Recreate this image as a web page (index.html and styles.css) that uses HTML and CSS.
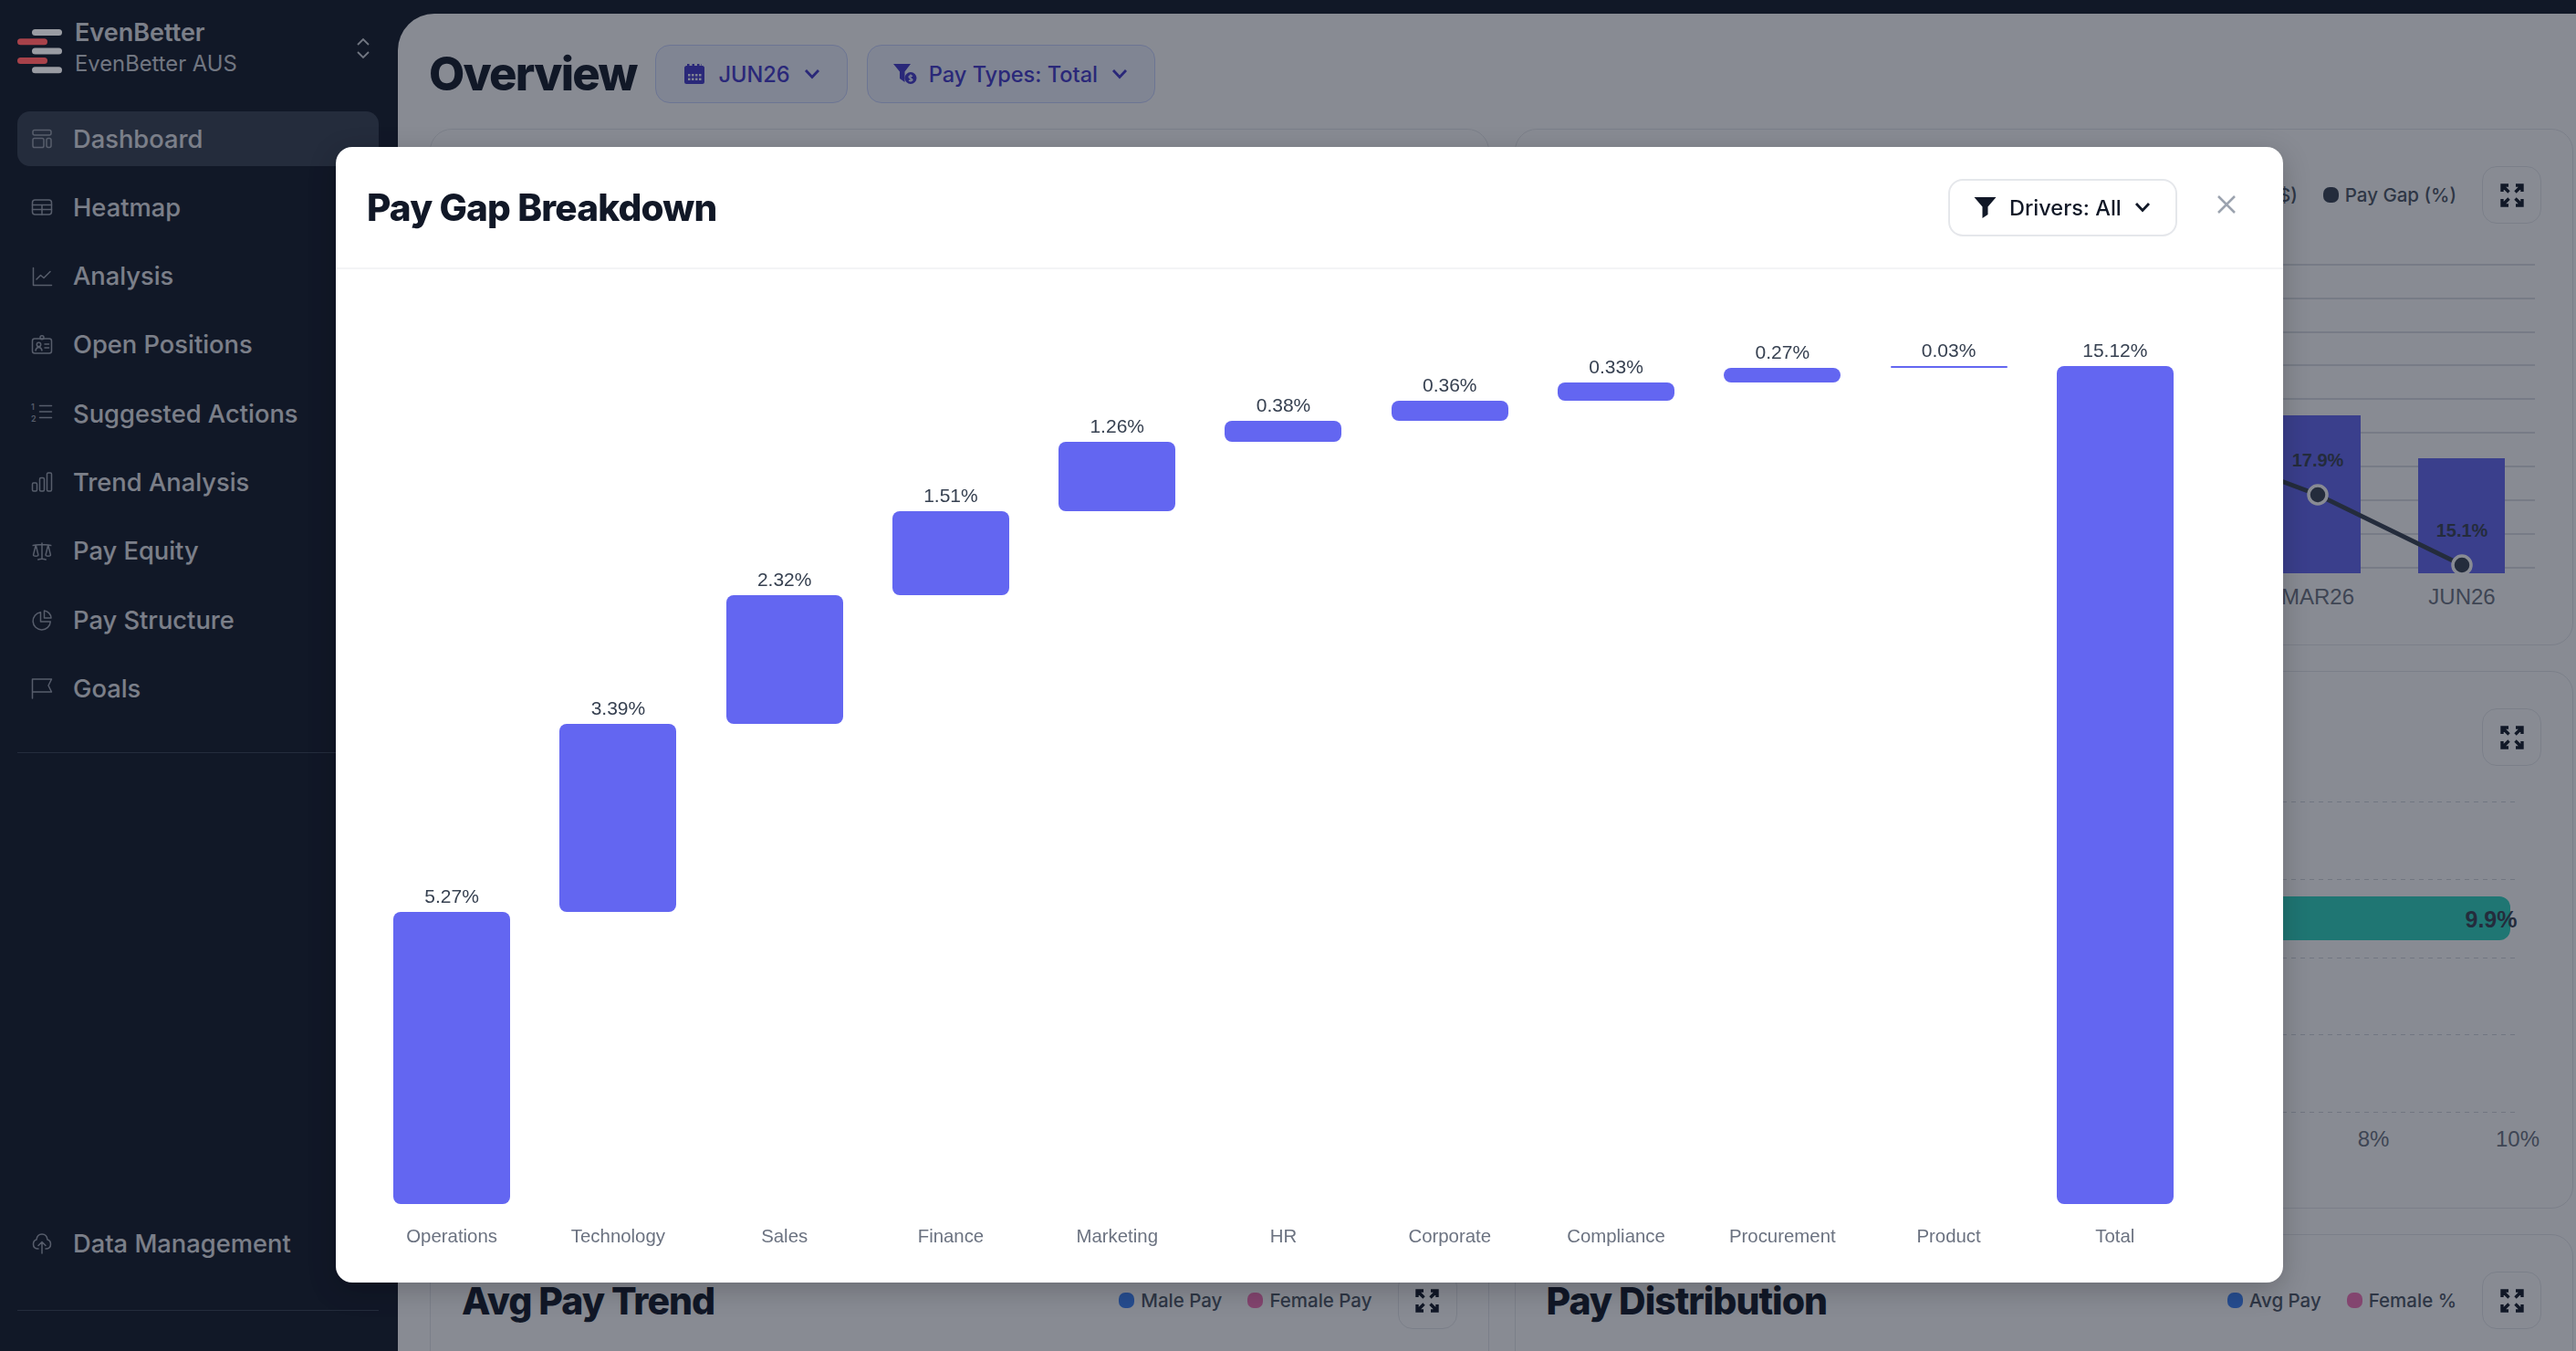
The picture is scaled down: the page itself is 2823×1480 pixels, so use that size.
FILE: index.html
```html
<!DOCTYPE html>
<html lang="en">
<head>
<meta charset="utf-8">
<title>Overview</title>
<link rel="stylesheet" href="styles.css">
</head>
<body>
<div class="app">
  <aside class="sidebar">
    <div class="brand">
      <svg class="logo" viewBox="0 0 50 50" width="50" height="50">
        <rect class="logo-g" x="16" y="0" width="33" height="7" rx="3.5"/>
        <rect class="logo-r" x="0" y="10.3" width="33" height="7" rx="3.5"/>
        <rect class="logo-g" x="16" y="20.6" width="33" height="7" rx="3.5"/>
        <rect class="logo-r" x="0" y="30.9" width="33" height="7" rx="3.5"/>
        <rect class="logo-g" x="16" y="41.2" width="33" height="7" rx="3.5"/>
      </svg>
      <div class="brand-text">
        <div class="brand-name">EvenBetter</div>
        <div class="brand-sub">EvenBetter AUS</div>
      </div>
      <svg class="brand-chev" viewBox="0 0 16 24" width="16" height="24"><path d="M2 8l6-6 6 6M2 16l6 6 6-6"/></svg>
    </div>
    <nav class="nav">
      <a class="nav-item active"><svg class="ico" viewBox="0 0 24 24"><rect x="2" y="2.5" width="20" height="5.5" rx="2"/><rect x="2" y="11.5" width="12" height="10" rx="1.8"/><rect x="17" y="11.5" width="5" height="10" rx="2"/></svg><span>Dashboard</span></a>
      <a class="nav-item"><svg class="ico" viewBox="0 0 24 24"><rect x="1.500" y="4" width="21" height="16" rx="3"/><path d="M1.500 9.500h21M1.500 14.500h21M12 9.500v10.500"/></svg><span>Heatmap</span></a>
      <a class="nav-item"><svg class="ico" viewBox="0 0 24 24"><path d="M2.500 2.500v19h20M6 15l4.500-4.500 3.500 3 7-7"/></svg><span>Analysis</span></a>
      <a class="nav-item"><svg class="ico" viewBox="0 0 24 24"><rect x="1.500" y="5" width="21" height="16" rx="2.500"/><circle cx="12" cy="3.800" r="2"/><circle cx="8.500" cy="11.500" r="2.200"/><path d="M5 18c.5-2.500 2-3.500 3.500-3.500S11.500 15.500 12 18M15 11h4.500M15 15h4.500"/></svg><span>Open Positions</span></a>
      <a class="nav-item"><svg class="ico" viewBox="0 0 24 24"><path d="M9.500 5.500h13M9.500 12h13M9.500 18.500h13" transform="translate(0 -2)"/><text class="ico-num" x="0" y="7.500">1</text><text class="ico-num" x="0" y="20.500">2</text></svg><span>Suggested Actions</span></a>
      <a class="nav-item"><svg class="ico" viewBox="0 0 24 24"><path d="M1.500 14.500c0-.8.500-1.500 1.300-1.500h2.400c.8 0 1.300.7 1.300 1.500v6c0 .8-.5 1.500-1.300 1.500H2.800c-.8 0-1.300-.7-1.300-1.500v-6ZM9.500 9c0-.8.500-1.500 1.300-1.500h2.400c.8 0 1.300.7 1.300 1.500v11.500c0 .8-.5 1.500-1.300 1.500h-2.400c-.8 0-1.300-.7-1.300-1.500V9ZM17.500 3.500c0-.8.500-1.500 1.300-1.500h2.400c.8 0 1.300.7 1.300 1.500v17c0 .8-.5 1.500-1.300 1.500h-2.400c-.8 0-1.300-.7-1.300-1.500v-17Z"/></svg><span>Trend Analysis</span></a>
      <a class="nav-item"><svg class="ico" viewBox="0 0 24 24"><path d="M12 3v17.250m0 0c-1.472 0-2.882.265-4.185.75M12 20.250c1.472 0 2.882.265 4.185.75M18.750 4.970A48.416 48.416 0 0 0 12 4.500c-2.291 0-4.545.16-6.750.47m13.500 0c1.010.143 2.010.317 3 .52m-3-.52 2.620 10.726c.122.499-.106 1.028-.589 1.202a5.988 5.988 0 0 1-2.031.352 5.988 5.988 0 0 1-2.031-.352c-.483-.174-.711-.703-.59-1.202L18.750 4.971Zm-16.500.52c.99-.203 1.990-.377 3-.52m0 0 2.620 10.726c.122.499-.106 1.028-.589 1.202a5.989 5.989 0 0 1-2.031.352 5.989 5.989 0 0 1-2.031-.352c-.483-.174-.711-.703-.59-1.202L5.250 4.971Z"/></svg><span>Pay Equity</span></a>
      <a class="nav-item"><svg class="ico" viewBox="0 0 24 24"><path d="M10.500 3.800a9.600 9.600 0 1 0 10.800 10.200h-10.800V3.800Z"/><path d="M14.500 10h7.500a8.500 8.500 0 0 0-7.500-8v8Z"/></svg><span>Pay Structure</span></a>
      <a class="nav-item"><svg class="ico" viewBox="0 0 24 24"><path d="M1.500 23V2h21l-3.500 7 3.500 7H1.500"/></svg><span>Goals</span></a>
    </nav>
    <div class="side-rule"></div>
    <a class="nav-item data-item"><svg class="ico" viewBox="0 0 24 24"><path d="M12 23V10.500M8 14.500l4-4 4 4M8 18c-3.500 0-5.500-2-5.500-5 0-2.500 1.500-4.500 3.500-5C6.500 4 9 2 12 2s5.500 2 6 6c2 .5 3.500 2.500 3.500 5 0 3-2 5-5.500 5"/></svg><span>Data Management</span></a>
    <div class="side-rule side-rule-end"></div>
  </aside>

  <main class="main">
    <header class="page-head">
      <h1 class="page-title">Overview</h1>
      <button class="pill"><svg class="pill-ico" viewBox="0 0 22 22"><path d="M3 0h2.500v3H3zM8.500 0H11v3H8.500zM14 0h2.500v3H14zM19 0h-.5v3H19z" /><path fill-rule="evenodd" d="M2.500 2h17A2.500 2.500 0 0 1 22 4.500v15a2.500 2.500 0 0 1-2.500 2.500h-17A2.500 2.500 0 0 1 0 19.500v-15A2.500 2.500 0 0 1 2.500 2ZM4 11h2.500v2.500H4Zm4 0h2.500v2.500H8Zm4 0h2.500v2.500H12Zm4 0h2.500v2.500H16ZM4 15.500h2.500V18H4Zm4 0h2.500V18H8Zm4 0h2.500V18H12Zm4 0h2.500V18H16Z"/></svg><span>JUN26</span><svg class="pill-chev" viewBox="0 0 18 12"><path d="M2 2l7 7.500L16 2"/></svg></button>
      <button class="pill"><svg class="pill-ico pill-ico-w" viewBox="0 0 26 22"><path d="M0 0h19l-6.500 8.500V20L7 16V8.500Z"/><circle cx="19" cy="15.500" r="6.500"/><path class="pill-dollar" d="M19 11.500v8M21 13.500c-1-1-4-1-4 .8s4 1.200 4 3c0 1.700-3 1.700-4 .7"/></svg><span>Pay Types: Total</span><svg class="pill-chev" viewBox="0 0 18 12"><path d="M2 2l7 7.500L16 2"/></svg></button>
    </header>

    <section class="grid">
      <article class="card card-left-top"></article>

      <article class="card">
        <div class="card-head">
          <h2 class="card-title">Pay Gap Trend</h2>
          <div class="legend">
            <span class="leg"><i class="dot dot-indigo"></i>Pay Gap ($)</span>
            <span class="leg"><i class="dot dot-slate"></i>Pay Gap (%)</span>
            <button class="expand"><svg viewBox="0 0 28 28"><path d="M3 10V3h7M3 3l7.500 7.500M25 10V3h-7M25 3l-7.500 7.500M3 18v7h7M3 25l7.500-7.500M25 18v7h-7M25 25l-7.500-7.500"/></svg></button>
          </div>
        </div>
        <svg class="chart" viewBox="0 0 1159 430" width="1159" height="430">
          <g class="hgrid">
            <path d="M700 45h417M700 82h417M700 119h417M700 155h417M700 192h417M700 229h417M700 266h417M700 303h417M700 340h417M700 377h417"/>
          </g>
          <rect class="vbar" x="831" y="210" width="95" height="173" />
          <rect class="vbar" x="989" y="257" width="95" height="126" />
          <path class="trend" d="M700 230L879 297L1037 374"/>
          <circle class="pt" cx="879" cy="297" r="10"/>
          <circle class="pt" cx="1037" cy="374" r="10"/>
          <text class="bar-val" x="879" y="266">17.9%</text>
          <text class="bar-val" x="1037" y="343">15.1%</text>
          <text class="axis" x="879" y="417">MAR26</text>
          <text class="axis" x="1037" y="417">JUN26</text>
        </svg>
      </article>

      <article class="card">
        <div class="card-head">
          <h2 class="card-title">Pay Gap by Tenure</h2>
          <div class="legend">
            <button class="expand"><svg viewBox="0 0 28 28"><path d="M3 10V3h7M3 3l7.500 7.500M25 10V3h-7M25 3l-7.500 7.500M3 18v7h7M3 25l7.500-7.500M25 18v7h-7M25 25l-7.500-7.500"/></svg></button>
          </div>
        </div>
        <svg class="chart" viewBox="0 0 1159 440" width="1159" height="440">
          <path class="dgrid" d="M700 39.500h397M700 124.500h397M700 210.500h397M700 294.500h397M700 379.500h397"/>
          <path class="hbar" d="M700 143h378a12 12 0 0 1 12 12v24a12 12 0 0 1-12 12H700Z"/>
          <text class="bar-val bar-val-lg" x="1069" y="177">9.9%</text>
          <text class="axis" x="940" y="417">8%</text>
          <text class="axis" x="1098" y="417">10%</text>
        </svg>
      </article>

      <article class="card">
        <div class="card-head">
          <h2 class="card-title">Avg Pay Trend</h2>
          <div class="legend">
            <span class="leg"><i class="dot dot-blue"></i>Male Pay</span>
            <span class="leg"><i class="dot dot-pink"></i>Female Pay</span>
            <button class="expand"><svg viewBox="0 0 28 28"><path d="M3 10V3h7M3 3l7.500 7.500M25 10V3h-7M25 3l-7.500 7.500M3 18v7h7M3 25l7.500-7.500M25 18v7h-7M25 25l-7.500-7.500"/></svg></button>
          </div>
        </div>
      </article>

      <article class="card">
        <div class="card-head">
          <h2 class="card-title">Pay Distribution</h2>
          <div class="legend">
            <span class="leg"><i class="dot dot-blue"></i>Avg Pay</span>
            <span class="leg"><i class="dot dot-pink"></i>Female %</span>
            <button class="expand"><svg viewBox="0 0 28 28"><path d="M3 10V3h7M3 3l7.500 7.500M25 10V3h-7M25 3l-7.500 7.500M3 18v7h7M3 25l7.500-7.500M25 18v7h-7M25 25l-7.500-7.500"/></svg></button>
          </div>
        </div>
      </article>
    </section>
  </main>
</div>

<div class="overlay"></div>

<div class="modal" role="dialog">
  <header class="modal-head">
    <h2 class="modal-title">Pay Gap Breakdown</h2>
    <button class="driver-btn"><svg class="driver-ico" viewBox="0 0 25 23"><path d="M.5 0h24L15.500 10.500V19l-6 4V10.500Z"/></svg><span>Drivers: All</span><svg class="driver-chev" viewBox="0 0 18 12"><path d="M2 2l7 7.500L16 2"/></svg></button>
    <button class="close"><svg viewBox="0 0 20 20"><path d="M1 1l18 18M19 1L1 19"/></svg></button>
  </header>
  <div class="waterfall">
    <div class="wf-col"><div class="wf-plot"><span class="wf-val">5.27%</span><div class="wf-bar" style="height:320px;margin-bottom:0"></div></div><span class="wf-label">Operations</span></div>
    <div class="wf-col"><div class="wf-plot"><span class="wf-val">3.39%</span><div class="wf-bar" style="height:206px;margin-bottom:320px"></div></div><span class="wf-label">Technology</span></div>
    <div class="wf-col"><div class="wf-plot"><span class="wf-val">2.32%</span><div class="wf-bar" style="height:141px;margin-bottom:526px"></div></div><span class="wf-label">Sales</span></div>
    <div class="wf-col"><div class="wf-plot"><span class="wf-val">1.51%</span><div class="wf-bar" style="height:92px;margin-bottom:667px"></div></div><span class="wf-label">Finance</span></div>
    <div class="wf-col"><div class="wf-plot"><span class="wf-val">1.26%</span><div class="wf-bar" style="height:76px;margin-bottom:759px"></div></div><span class="wf-label">Marketing</span></div>
    <div class="wf-col"><div class="wf-plot"><span class="wf-val">0.38%</span><div class="wf-bar" style="height:23px;margin-bottom:835px"></div></div><span class="wf-label">HR</span></div>
    <div class="wf-col"><div class="wf-plot"><span class="wf-val">0.36%</span><div class="wf-bar" style="height:22px;margin-bottom:858px"></div></div><span class="wf-label">Corporate</span></div>
    <div class="wf-col"><div class="wf-plot"><span class="wf-val">0.33%</span><div class="wf-bar" style="height:20px;margin-bottom:880px"></div></div><span class="wf-label">Compliance</span></div>
    <div class="wf-col"><div class="wf-plot"><span class="wf-val">0.27%</span><div class="wf-bar" style="height:16px;margin-bottom:900px"></div></div><span class="wf-label">Procurement</span></div>
    <div class="wf-col"><div class="wf-plot"><span class="wf-val">0.03%</span><div class="wf-bar" style="height:2px;margin-bottom:916px"></div></div><span class="wf-label">Product</span></div>
    <div class="wf-col"><div class="wf-plot"><span class="wf-val">15.12%</span><div class="wf-bar" style="height:918px;margin-bottom:0"></div></div><span class="wf-label">Total</span></div>
  </div>
</div>
</body>
</html>
```
FILE: styles.css
```css
* { box-sizing: border-box; }
html, body { margin: 0; height: 100%; overflow: hidden; }
body { font-family: Inter, "Liberation Sans", sans-serif; background: #111827; color: #111827; }
h1, h2 { margin: 0; }
button { font: inherit; background: none; padding: 0; border: 0; }

.app { display: flex; height: 1480px; padding-top: 15px; }

/* sidebar */
.sidebar { width: 436px; flex: none; margin-top: -15px; padding: 0 21px 44px 19px; display: flex; flex-direction: column; color: #e5e7eb; }
.brand { display: flex; align-items: center; height: 106px; margin-bottom: 16px; }
.logo { flex: none; align-self: flex-start; margin-top: 32px; width: 50px; height: 50px; position: relative; z-index: 1; }
.logo-g { fill: #9a9ca3; }
.logo-r { fill: #a8424a; }
.brand-text { margin-left: 13px; flex: 1; }
.brand-name { font-size: 27px; font-weight: 600; line-height: 34px; }
.brand-sub { font-size: 23.800px; line-height: 34px; color: #d1d5db; }
.brand-chev { flex: none; margin-right: 9px; fill: none; stroke: #d1d5db; stroke-width: 1.800; }

.nav { display: flex; flex-direction: column; gap: 15.300px; }
.nav-item { display: flex; align-items: center; gap: 22px; height: 60px; padding-left: 15px; font-size: 27.300px; font-weight: 500; border-radius: 14px; color: #e5e7eb; }
.nav-item.active { background: #374151; }
.ico { width: 24px; height: 24px; flex: none; fill: none; stroke: #9ca3af; stroke-width: 1.500; stroke-linecap: round; stroke-linejoin: round; }
.ico-num { font-size: 9px; font-weight: 600; fill: #9ca3af; stroke: none; }
.side-rule { height: 1px; background: #374151; margin-top: 40px; }
.data-item { margin-top: auto; }
.side-rule-end { margin-top: 43px; }

/* main */
.main { flex: 1; min-width: 0; background: #fff; border-radius: 40px 0 0 0; padding: 34px 3px 0 35px; overflow: hidden; height: 1465px; }
.page-head { display: flex; align-items: center; gap: 21px; height: 64px; margin-bottom: 28px; }
.page-title { font-size: 50.800px; font-weight: 800; letter-spacing: -0.035em; line-height: 64px; color: #111827; margin-left: -1px; }
.pill { display: flex; align-items: center; gap: 15px; height: 64px; padding: 0 29px; background: #eef2ff; border: 1.500px solid #c7d2fe; border-radius: 16px; color: #4338ca; font-size: 23.600px; font-weight: 500; }
.pill-ico { width: 22px; height: 22px; fill: #4338ca; margin-left: 2px; }
.pill-ico-w { width: 26px; margin: 0 -2px 0 -1px; }
.pill-dollar { fill: none; stroke: #eef2ff; stroke-width: 1.300; }
.pill-chev { width: 18px; height: 12px; fill: none; stroke: #4338ca; stroke-width: 2.800; }

.grid { display: grid; grid-template-columns: 1fr 1fr; grid-template-rows: 566px 589px 300px; gap: 28px; row-gap: 28px; }
.card { border: 1px solid #e5e7eb; border-radius: 24px; background: #fff; overflow: hidden; }
.card-left-top { grid-row: span 2; }
.card-head { display: flex; align-items: center; justify-content: space-between; padding: 40px 34px 0 34px; height: 103px; }
.card-title { font-size: 41px; font-weight: 800; letter-spacing: -0.025em; color: #111827; }
.legend { display: flex; align-items: center; gap: 28px; }
.leg { display: flex; align-items: center; gap: 7px; font-size: 20.500px; font-weight: 500; color: #4b5563; }
.dot { width: 17px; height: 17px; border-radius: 7px; display: block; }
.dot-indigo { background: #6366f1; }
.dot-slate { background: #374151; }
.dot-blue { background: #3b82f6; }
.dot-pink { background: #f472b6; }
.expand { width: 65px; height: 63px; display: flex; align-items: center; justify-content: center; border: 1px solid #e5e7eb; border-radius: 16px; }
.expand svg { width: 28px; height: 28px; fill: none; stroke: #111827; stroke-width: 3.400; }

.chart { display: block; }
.hgrid path { stroke: #d1d5db; stroke-width: 1.500; fill: none; }
.vbar { fill: #6366f1; }
.trend { fill: none; stroke: #374151; stroke-width: 5; }
.pt { fill: #374151; stroke: #fff; stroke-width: 3.500; }
.bar-val { font-family: "Liberation Sans", sans-serif; font-size: 20px; font-weight: 700; fill: #374151; text-anchor: middle; }
.bar-val-lg { font-size: 25px; }
.axis { font-family: "Liberation Sans", sans-serif; font-size: 24px; fill: #6b7280; text-anchor: middle; }
.dgrid { stroke: #d1d5db; stroke-width: 1.200; stroke-dasharray: 5 5; fill: none; }
.hbar { fill: #2dd4bf; }

/* overlay + dialog */
.overlay { position: fixed; inset: 0; background: rgba(17, 24, 39, .5); }
.modal { position: fixed; z-index: 2; left: 368px; top: 161px; width: 2134px; height: 1244px; background: #fff; border-radius: 18px; display: flex; flex-direction: column; box-shadow: 0 8px 30px rgba(0, 0, 0, .22); }
.modal-head { display: flex; align-items: center; height: 134px; padding: 0 52px 0 34px; border-bottom: 2px solid #f3f4f6; flex: none; }
.modal-title { flex: 1; font-size: 40.500px; font-weight: 800; letter-spacing: -0.020em; color: #111827; }
.driver-btn { display: flex; align-items: center; gap: 14px; width: 251px; height: 63px; padding-left: 26px; border: 2px solid #e5e7eb; border-radius: 16px; color: #111827; font-size: 23.500px; font-weight: 500; }
.driver-ico { width: 25px; height: 23px; fill: #111827; }
.driver-chev { width: 18px; height: 12px; fill: none; stroke: #111827; stroke-width: 2.800; }
.close { margin-left: 44px; width: 20px; height: 20px; margin-top: -6px; }
.close svg { display: block; width: 20px; height: 20px; fill: none; stroke: #9ca3af; stroke-width: 2.500; }

.waterfall { flex: 1; display: grid; grid-template-columns: repeat(11, 1fr); padding: 0 93px 39px 36px; min-height: 0; }
.wf-col { display: flex; flex-direction: column; align-items: center; min-width: 0; }
.wf-plot { flex: 1; width: 100%; display: flex; flex-direction: column; align-items: center; justify-content: flex-end; }
.wf-val { font-family: "Liberation Sans", sans-serif; font-size: 21px; line-height: 24px; margin-bottom: 5px; color: #374151; }
.wf-bar { width: 128px; background: #6366f1; border-radius: 8px; flex: none; }
.wf-label { font-family: "Liberation Sans", sans-serif; font-size: 20.400px; line-height: 24px; margin-top: 23px; color: #6b7280; }
```
